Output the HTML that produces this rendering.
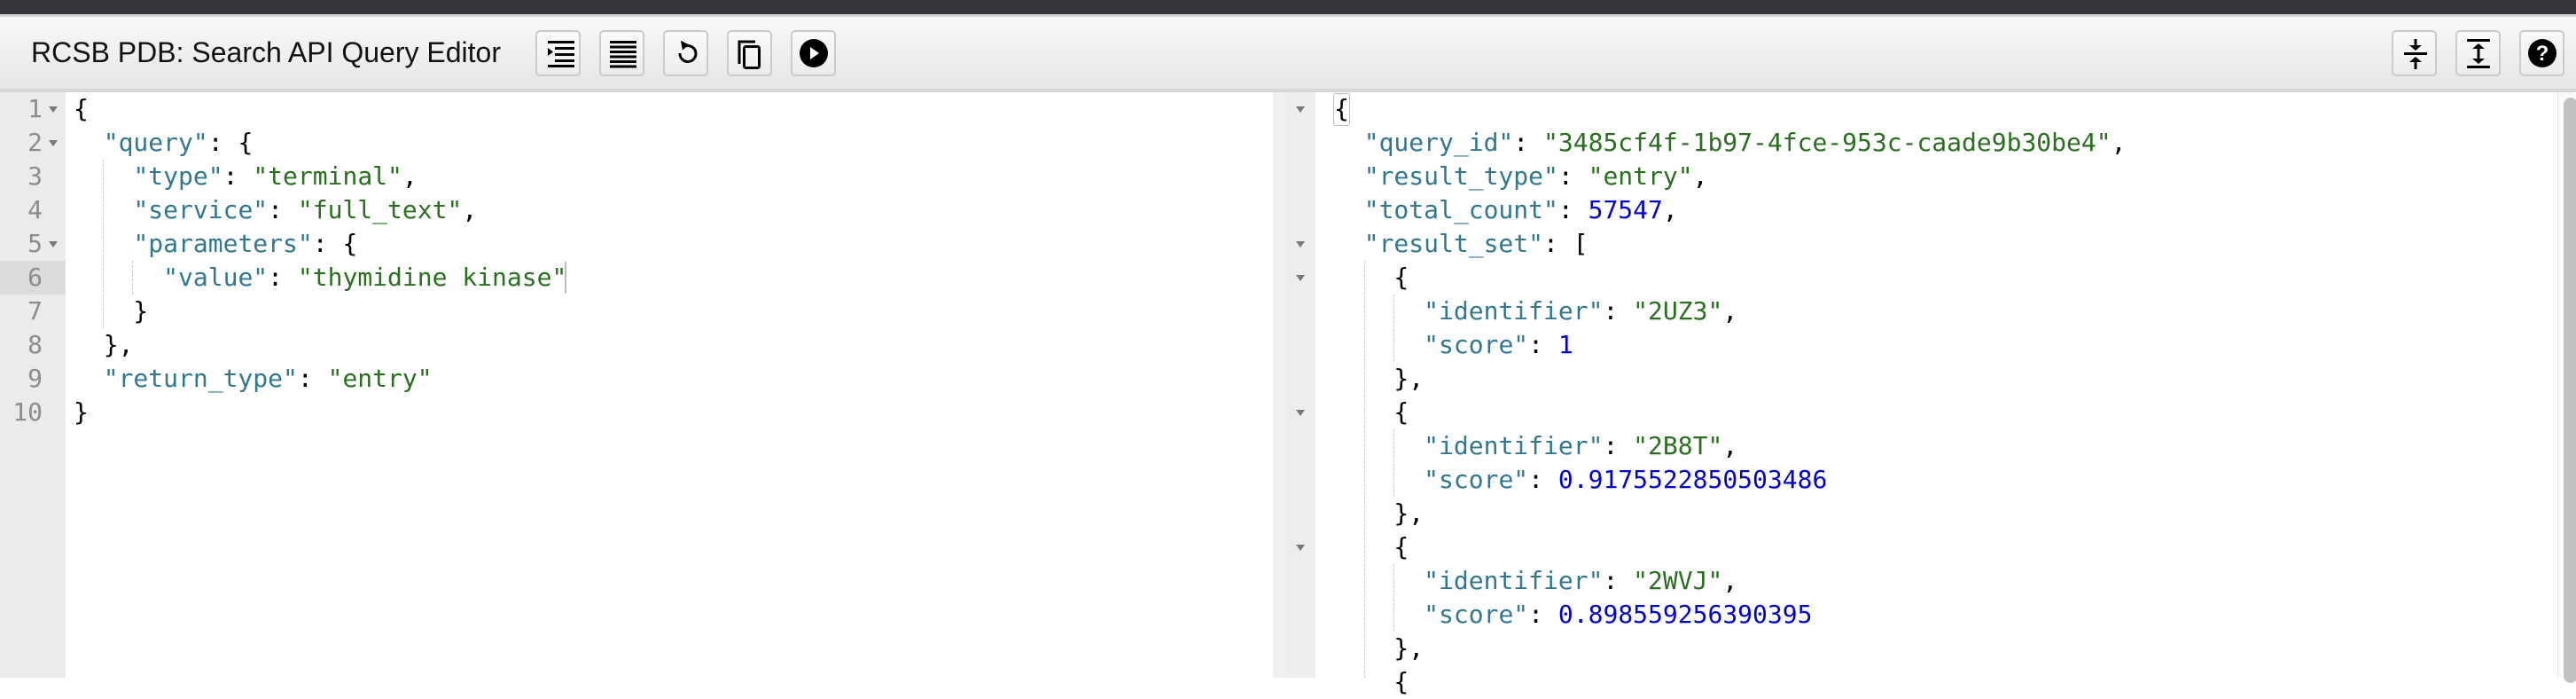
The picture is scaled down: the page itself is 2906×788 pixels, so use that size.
<!DOCTYPE html>
<html><head><meta charset="utf-8"><style>
*{margin:0;padding:0;box-sizing:border-box}
body{width:2906px;height:764px;overflow:hidden;background:#fff;position:relative;font-family:"DejaVu Sans Mono","Liberation Mono",monospace}
#top{position:absolute;left:0;top:0;width:2906px;height:16px;background:#35363b}
#tb{position:absolute;left:0;top:16px;width:2906px;height:88px;background:linear-gradient(#f8f8f8,#e6e6e6);border-top:3px solid #d4d4d4;border-bottom:4px solid #d6d6d6}
#title{position:absolute;left:35px;top:41px;font:32px "Liberation Sans",Arial,sans-serif;color:#111}
.btn{position:absolute;top:34px;width:51px;height:52px;border:2px solid #cbcbcb;border-radius:5px;background:linear-gradient(#fafafa,#ececec)}
.btn svg{position:absolute;left:0;top:0}
.gut{position:absolute;top:104px;height:660px;background:#ebebeb}
.ln{position:absolute;font-size:28px;line-height:38px;height:38px;color:#8c8c8c;text-align:right}
.code{position:absolute;font-size:28px;line-height:38px;height:38px;white-space:pre;color:#000}
.k{color:#31788f}.s{color:#2a6e1f}.n{color:#0000cd}
.arr{position:absolute;width:0;height:0;border-left:5px solid transparent;border-right:5px solid transparent;border-top:7px solid #777}
.guide{position:absolute;width:0;border-left:1px dashed #c8c8c8}
</style></head><body>
<div id="top"></div>
<div id="tb"></div>
<div id="title">RCSB PDB: Search API Query Editor</div>

<div class="btn" style="left:604px"><svg width="48" height="48"><g fill="#000"><rect x="12" y="10" width="30" height="3"/><rect x="20" y="17" width="22" height="3"/><rect x="20" y="24" width="22" height="3"/><rect x="20" y="31" width="22" height="3"/><rect x="12" y="37" width="30" height="3"/><polygon points="12,18 18,22.5 12,27"/></g></svg></div>
<div class="btn" style="left:676px"><svg width="48" height="48"><g fill="#000"><rect x="10" y="10" width="30" height="3"/><rect x="10" y="15.5" width="30" height="3"/><rect x="10" y="21" width="30" height="3"/><rect x="10" y="26.5" width="30" height="3"/><rect x="10" y="32" width="30" height="3"/><rect x="10" y="37.5" width="30" height="3"/></g></svg></div>
<div class="btn" style="left:748px"><svg width="48" height="48"><path d="M17 24 A9 9 0 1 0 23 16" fill="none" stroke="#000" stroke-width="3"/><polygon points="19,9 27,15 19,20" fill="#000" transform="rotate(-10 23 15)"/></svg></div>
<div class="btn" style="left:820px"><svg width="48" height="48"><path d="M12 36 V11 H30" fill="none" stroke="#000" stroke-width="3"/><rect x="17.5" y="16.5" width="17" height="24" rx="2" fill="none" stroke="#000" stroke-width="3"/></svg></div>
<div class="btn" style="left:892px"><svg width="48" height="48"><circle cx="24" cy="24" r="16" fill="#000"/><polygon points="20,17 30,24 20,31" fill="#fff"/></svg></div>

<div class="btn" style="left:2698px"><svg width="48" height="48"><g fill="#000"><rect x="12" y="23" width="26" height="3"/><rect x="23.5" y="8" width="3" height="8"/><polygon points="18,15 32,15 25,21"/><rect x="23.5" y="33" width="3" height="9"/><polygon points="18,34 32,34 25,28"/></g></svg></div>
<div class="btn" style="left:2770px"><svg width="48" height="48"><g fill="#000"><rect x="11" y="8" width="26" height="3"/><rect x="11" y="38" width="26" height="3"/><rect x="22.5" y="16" width="3" height="17"/><polygon points="17,19 31,19 24,13"/><polygon points="17,30 31,30 24,36"/></g></svg></div>
<div class="btn" style="left:2842px"><svg width="48" height="48"><circle cx="24" cy="24" r="16" fill="#000"/><text x="24" y="32" text-anchor="middle" font-family="Liberation Sans,sans-serif" font-weight="bold" font-size="24" fill="#fff">?</text></svg></div>

<!-- left editor -->
<div class="gut" style="left:0;width:74px"></div>
<div style="position:absolute;left:0;top:294px;width:74px;height:38px;background:#dcdcdc"></div>
<div class="ln" style="left:0;width:48px;top:104px">1</div>
<div class="ln" style="left:0;width:48px;top:142px">2</div>
<div class="ln" style="left:0;width:48px;top:180px">3</div>
<div class="ln" style="left:0;width:48px;top:218px">4</div>
<div class="ln" style="left:0;width:48px;top:256px">5</div>
<div class="ln" style="left:0;width:48px;top:294px">6</div>
<div class="ln" style="left:0;width:48px;top:332px">7</div>
<div class="ln" style="left:0;width:48px;top:370px">8</div>
<div class="ln" style="left:0;width:48px;top:408px">9</div>
<div class="ln" style="left:0;width:48px;top:446px">10</div>
<div class="arr" style="left:55px;top:120px"></div>
<div class="arr" style="left:55px;top:158px"></div>
<div class="arr" style="left:55px;top:272px"></div>
<div class="guide" style="left:116px;top:180px;height:190px"></div>
<div class="guide" style="left:149px;top:294px;height:38px"></div>
<div class="code" style="left:83px;top:104px">{</div>
<div class="code" style="left:83px;top:142px">  <span class="k">"query"</span>: {</div>
<div class="code" style="left:83px;top:180px">    <span class="k">"type"</span>: <span class="s">"terminal"</span>,</div>
<div class="code" style="left:83px;top:218px">    <span class="k">"service"</span>: <span class="s">"full_text"</span>,</div>
<div class="code" style="left:83px;top:256px">    <span class="k">"parameters"</span>: {</div>
<div class="code" style="left:83px;top:294px">      <span class="k">"value"</span>: <span class="s">"thymidine kinase"</span></div>
<div style="position:absolute;left:637px;top:295px;width:2px;height:36px;background:#bbb"></div>
<div class="code" style="left:83px;top:332px">    }</div>
<div class="code" style="left:83px;top:370px">  },</div>
<div class="code" style="left:83px;top:408px">  <span class="k">"return_type"</span>: <span class="s">"entry"</span></div>
<div class="code" style="left:83px;top:446px">}</div>

<!-- right editor -->
<div class="gut" style="left:1436px;width:48px;background:#ededed"></div>
<div style="position:absolute;left:1436px;top:104px;width:16px;height:660px;background:#f0f0f0"></div>
<div class="arr" style="left:1462px;top:120px"></div>
<div class="arr" style="left:1462px;top:272px"></div>
<div class="arr" style="left:1462px;top:310px"></div>
<div class="arr" style="left:1462px;top:462px"></div>
<div class="arr" style="left:1462px;top:614px"></div>
<div style="position:absolute;left:1504px;top:105px;width:19px;height:37px;border:1px solid #bbb;border-radius:3px"></div>
<div class="guide" style="left:1539px;top:294px;height:470px"></div>
<div class="guide" style="left:1572px;top:332px;height:76px"></div>
<div class="guide" style="left:1572px;top:484px;height:76px"></div>
<div class="guide" style="left:1572px;top:636px;height:76px"></div>
<div class="code" style="left:1505px;top:104px">{</div>
<div class="code" style="left:1505px;top:142px">  <span class="k">"query_id"</span>: <span class="s">"3485cf4f-1b97-4fce-953c-caade9b30be4"</span>,</div>
<div class="code" style="left:1505px;top:180px">  <span class="k">"result_type"</span>: <span class="s">"entry"</span>,</div>
<div class="code" style="left:1505px;top:218px">  <span class="k">"total_count"</span>: <span class="n">57547</span>,</div>
<div class="code" style="left:1505px;top:256px">  <span class="k">"result_set"</span>: [</div>
<div class="code" style="left:1505px;top:294px">    {</div>
<div class="code" style="left:1505px;top:332px">      <span class="k">"identifier"</span>: <span class="s">"2UZ3"</span>,</div>
<div class="code" style="left:1505px;top:370px">      <span class="k">"score"</span>: <span class="n">1</span></div>
<div class="code" style="left:1505px;top:408px">    },</div>
<div class="code" style="left:1505px;top:446px">    {</div>
<div class="code" style="left:1505px;top:484px">      <span class="k">"identifier"</span>: <span class="s">"2B8T"</span>,</div>
<div class="code" style="left:1505px;top:522px">      <span class="k">"score"</span>: <span class="n">0.9175522850503486</span></div>
<div class="code" style="left:1505px;top:560px">    },</div>
<div class="code" style="left:1505px;top:598px">    {</div>
<div class="code" style="left:1505px;top:636px">      <span class="k">"identifier"</span>: <span class="s">"2WVJ"</span>,</div>
<div class="code" style="left:1505px;top:674px">      <span class="k">"score"</span>: <span class="n">0.898559256390395</span></div>
<div class="code" style="left:1505px;top:712px">    },</div>
<div class="code" style="left:1505px;top:750px">    {</div>

<!-- scrollbar -->
<div style="position:absolute;left:2885px;top:104px;width:21px;height:660px;background:#fafafa;border-left:1px solid #e4e4e4"></div>
<div style="position:absolute;left:2892px;top:110px;width:16px;height:660px;background:#c1c1c1;border-radius:8px"></div>
</body></html>
